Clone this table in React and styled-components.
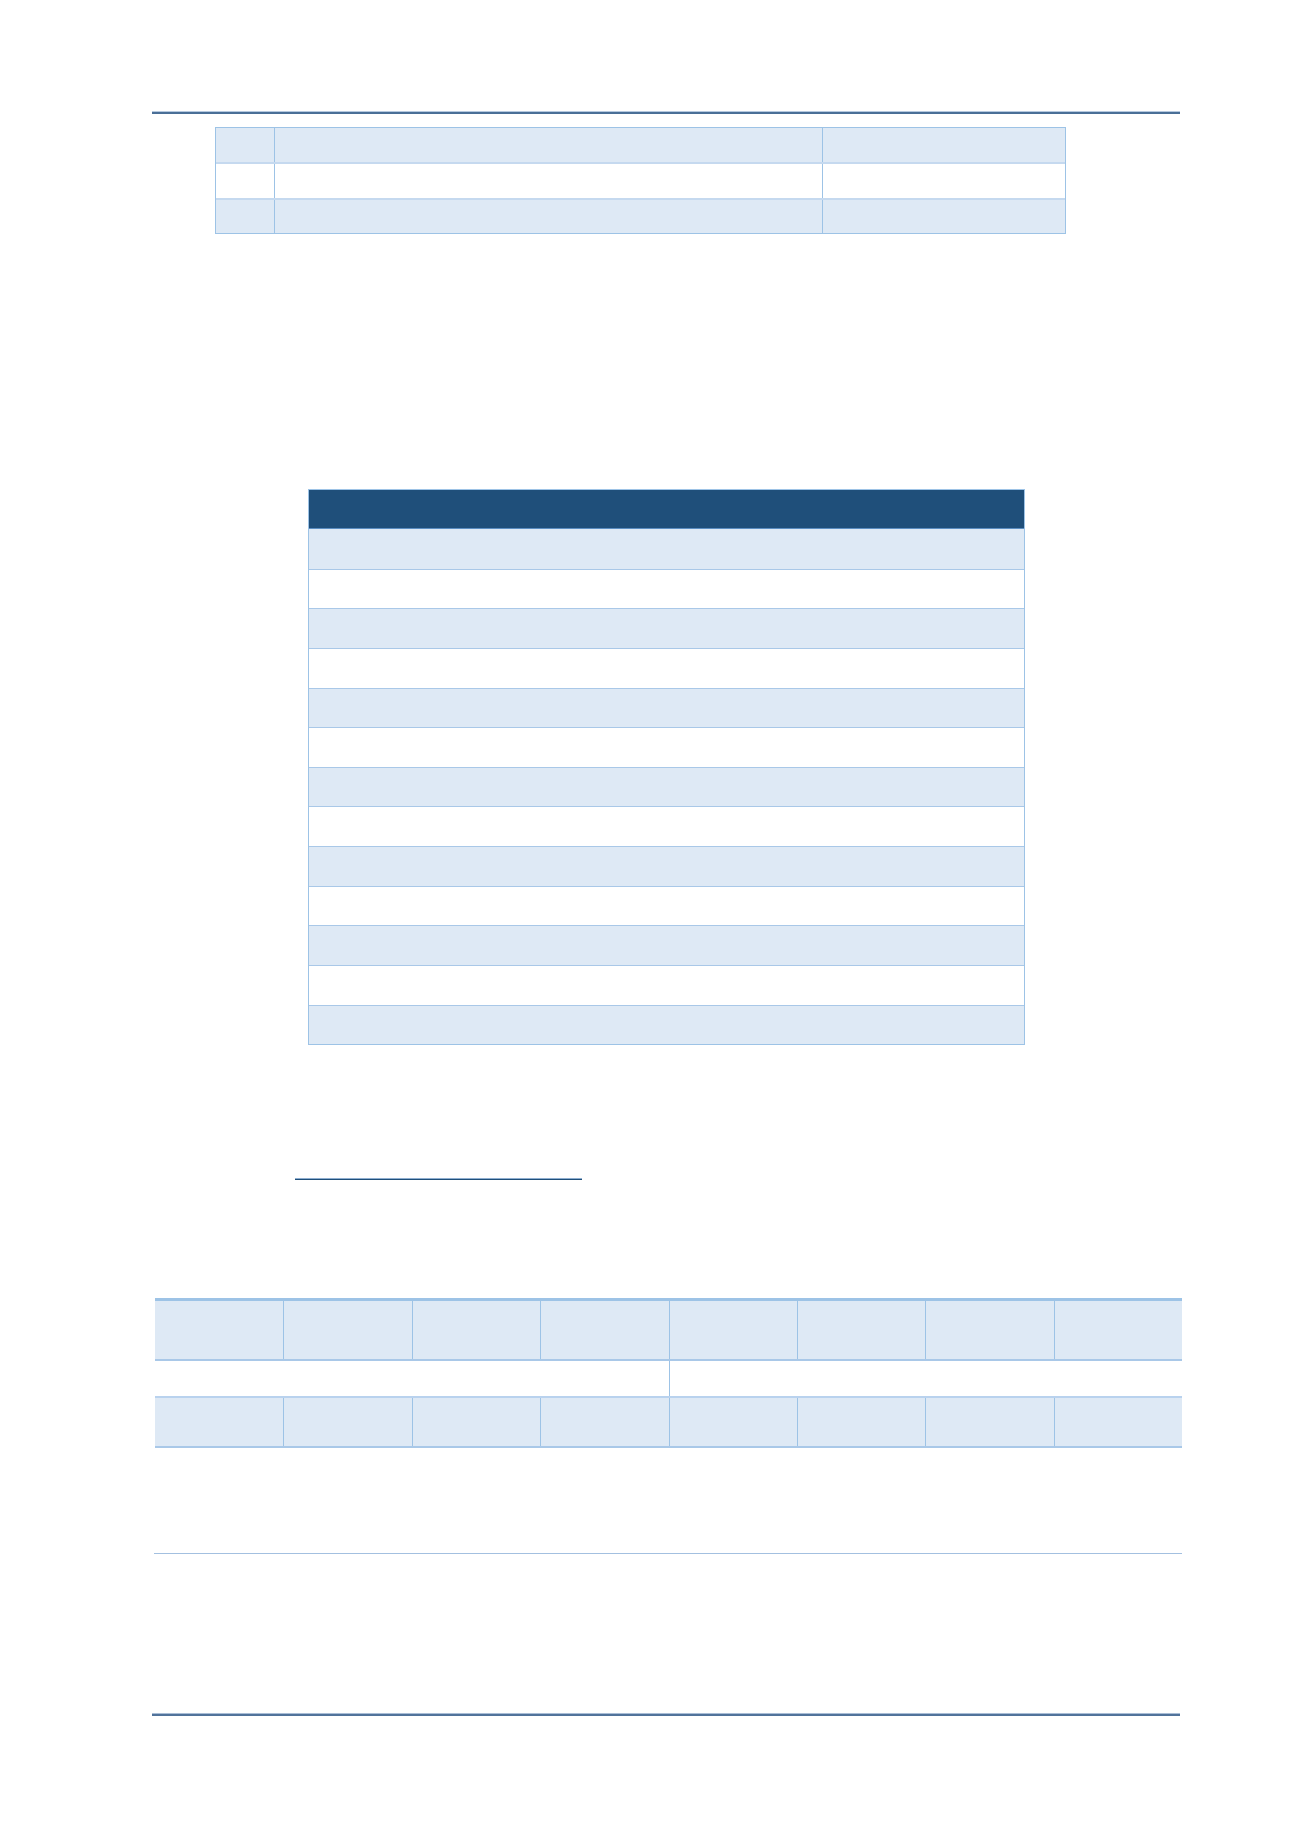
import React from "react";
import styled, { createGlobalStyle } from "styled-components";

const Global = createGlobalStyle`
  html, body { margin: 0; padding: 0; background: #ffffff; }
  body { font-family: "Liberation Sans", Arial, sans-serif; }
`;

const Page = styled.div`
  width: 1300px;
  min-height: 1839px;
  box-sizing: border-box;
  padding-top: 111px;
  display: flex;
  flex-direction: column;
  background: #fff;
`;

const Rule = styled.div`
  margin-left: ${(p) => p.$left}px;
  width: ${(p) => p.$width}px;
  margin-top: ${(p) => p.$top || 0}px;
  height: ${(p) => p.$h || 1}px;
  background: ${(p) => p.$color};
  border-top: ${(p) => (p.$light ? `1px solid ${p.$light}` : "none")};
`;

const Table = styled.div`
  margin-left: ${(p) => p.$left}px;
  width: ${(p) => p.$width}px;
  margin-top: ${(p) => p.$top}px;
  box-sizing: border-box;
  display: flex;
  flex-direction: column;
  border: ${(p) => p.$border || "none"};
`;

const Row = styled.div`
  display: grid;
  grid-template-columns: ${(p) => p.$cols};
  height: ${(p) => p.$h}px;
  box-sizing: border-box;
  background: ${(p) => p.$bg};
  border-top: ${(p) => p.$top || "none"};
  border-bottom: ${(p) => p.$bottom || "none"};
`;

const Cell = styled.div`
  box-sizing: border-box;
  border-left: ${(p) => (p.$first ? "none" : `1px solid ${p.$line || "#9dc3e6"}`)};
`;

const LIGHT = "#dee9f5";
const WHITE = "#ffffff";

function SmallTable() {
  const fills = [LIGHT, WHITE, LIGHT];
  const heights = [34, 35.5, 35.5];
  return (
    <Table $left={215} $width={851} $top={13} $border="1px solid #9dc3e6">
      {fills.map((bg, i) => (
        <Row
          key={i}
          $cols="58px 548px 1fr"
          $h={heights[i]}
          $bg={bg}
          $top={i === 0 ? "none" : "2px solid #c5d9ef"}
        >
          <Cell $first />
          <Cell />
          <Cell />
        </Row>
      ))}
    </Table>
  );
}

const Header = styled.div`
  height: 39px;
  background: #1f4f7a;
  border-bottom: 1px solid #5b8ec2;
  box-sizing: border-box;
`;

function ListTable() {
  const rows = Array.from({ length: 13 }, (_, i) => (i % 2 === 0 ? LIGHT : WHITE));
  return (
    <Table $left={308} $width={717} $top={255} $border="1px solid #9dc3e6">
      <Header />
      {rows.map((bg, i) => (
        <Row
          key={i}
          $cols="1fr"
          $h={39.65}
          $bg={bg}
          $top={i === 0 ? "none" : "1px solid #a9c8e8"}
        >
          <Cell $first />
        </Row>
      ))}
    </Table>
  );
}

const Underline = styled.div`
  margin-left: 295px;
  width: 287px;
  margin-top: 133px;
  height: 1px;
  background: #1f4f7a;
  border-top: 1px solid #8eaed0;
`;

function WideTable() {
  const eight = "repeat(8, 1fr)";
  return (
    <Table $left={155} $width={1027} $top={118}>
      <Row $cols={eight} $h={63} $bg={LIGHT} $top="3px solid #9dc3e6" $bottom="2px solid #a9c8e8">
        {Array.from({ length: 8 }, (_, i) => (
          <Cell key={i} $first={i === 0} />
        ))}
      </Row>
      <Row $cols="1fr 1fr" $h={35} $bg={WHITE}>
        <Cell $first />
        <Cell />
      </Row>
      <Row $cols={eight} $h={52} $bg={LIGHT} $top="2px solid #b9d2ee" $bottom="2px solid #a9c8e8">
        {Array.from({ length: 8 }, (_, i) => (
          <Cell key={i} $first={i === 0} />
        ))}
      </Row>
    </Table>
  );
}

export default function App() {
  return (
    <>
      <Global />
      <Page>
        <Rule $left={152} $width={1028} $h={2} $color="#4a6f97" $light="#b6c9df" />
        <SmallTable />
        <ListTable />
        <Underline />
        <WideTable />
        <Rule $left={154} $width={1028} $top={105} $h={1} $color="#a3c0e0" />
        <Rule $left={152} $width={1028} $top={159} $h={2} $color="#51739b" $light="#a9bdd6" />
      </Page>
    </>
  );
}
